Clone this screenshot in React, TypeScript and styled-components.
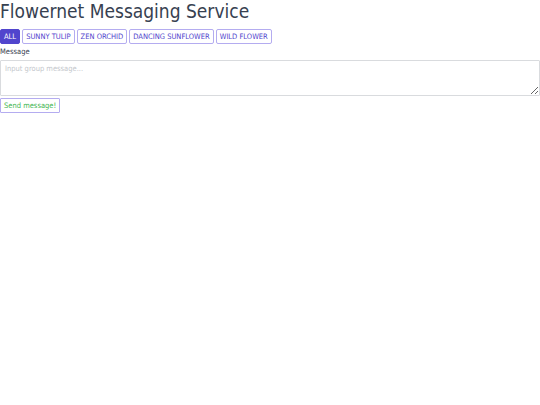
import styled, { createGlobalStyle } from "styled-components";

const GlobalStyle = createGlobalStyle`
  html, body {
    margin: 0;
    padding: 0;
    background: #ffffff;
    font-family: "DejaVu Sans Condensed", "DejaVu Sans", sans-serif;
    font-stretch: condensed;
  }
`;

const Page = styled.div`
  display: flex;
  flex-direction: column;
`;

const Title = styled.h1`
  margin: 0;
  font-size: 19px;
  font-weight: 400;
  line-height: 22px;
  color: #374151;
`;

const GroupBar = styled.div`
  display: flex;
  gap: 2px;
  margin-top: 7px;
`;

const GroupButton = styled.button<{ $active?: boolean }>`
  height: 15px;
  padding: 0 3px;
  font-family: inherit;
  font-stretch: condensed;
  font-size: 7.5px;
  text-transform: uppercase;
  border-radius: 2px;
  border: 1px solid ${(p) => (p.$active ? "#5145cd" : "#b4acf0")};
  background: ${(p) => (p.$active ? "#5145cd" : "#ffffff")};
  color: ${(p) => (p.$active ? "#ffffff" : "#5145cd")};
  cursor: pointer;
`;

const Label = styled.label`
  margin-top: 3px;
  font-size: 7.5px;
  line-height: 10px;
  color: #374151;
`;

const MessageInput = styled.textarea`
  margin-top: 3px;
  box-sizing: border-box;
  width: 100%;
  height: 36px;
  padding: 3px 4px;
  border: 1px solid #d9dbde;
  border-radius: 1px;
  font-family: inherit;
  font-stretch: condensed;
  font-size: 7.5px;
  &::placeholder {
    color: #c4c7cc;
  }
`;

const SendButton = styled.button`
  align-self: flex-start;
  margin-top: 2px;
  height: 15px;
  padding: 0 3px;
  font-family: inherit;
  font-stretch: condensed;
  font-size: 7.5px;
  border: 1px solid #b4acf0;
  border-radius: 1px;
  background: #ffffff;
  color: #3eb54f;
  cursor: pointer;
`;

const groups = ["All", "Sunny Tulip", "Zen Orchid", "Dancing Sunflower", "Wild Flower"];

export default function App() {
  return (
    <Page>
      <GlobalStyle />
      <Title>Flowernet Messaging Service</Title>
      <GroupBar>
        {groups.map((g, i) => (
          <GroupButton key={g} $active={i === 0}>
            {g}
          </GroupButton>
        ))}
      </GroupBar>
      <Label>Message</Label>
      <MessageInput placeholder="Input group message..." />
      <SendButton>Send message!</SendButton>
    </Page>
  );
}
